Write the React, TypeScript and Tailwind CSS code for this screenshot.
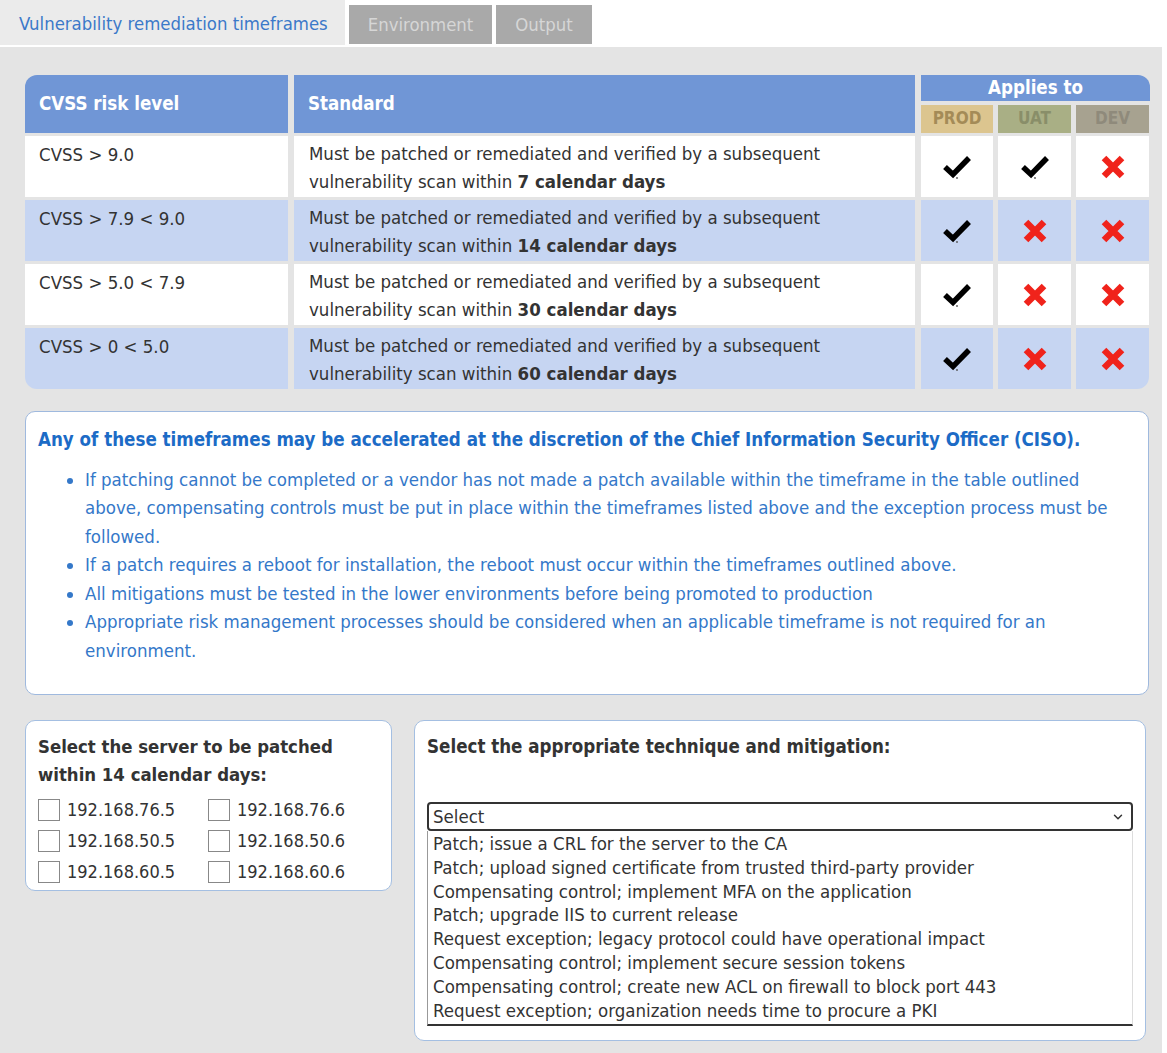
import React from 'react';
import { ChevronDown } from 'lucide-react';

const rows = [
  { level: 'CVSS > 9.0', days: '7', prod: true, uat: true, dev: false },
  { level: 'CVSS > 7.9 < 9.0', days: '14', prod: true, uat: false, dev: false },
  { level: 'CVSS > 5.0 < 7.9', days: '30', prod: true, uat: false, dev: false },
  { level: 'CVSS > 0 < 5.0', days: '60', prod: true, uat: false, dev: false },
];

const servers = [
  ['192.168.76.5', '192.168.76.6'],
  ['192.168.50.5', '192.168.50.6'],
  ['192.168.60.5', '192.168.60.6'],
];

const options = [
  'Patch; issue a CRL for the server to the CA',
  'Patch; upload signed certificate from trusted third-party provider',
  'Compensating control; implement MFA on the application',
  'Patch; upgrade IIS to current release',
  'Request exception; legacy protocol could have operational impact',
  'Compensating control; implement secure session tokens',
  'Compensating control; create new ACL on firewall to block port 443',
  'Request exception; organization needs time to procure a PKI',
];

function Check() {
  return (
    <svg width="30" height="26" viewBox="0 0 30 26">
      <path d="M3 13 L11 20.5 L27 4" fill="none" stroke="#000" strokeWidth="5.5" strokeLinejoin="miter" />
      <circle cx="15" cy="24" r="0.9" fill="#555" />
    </svg>
  );
}

function Cross() {
  return (
    <svg width="26" height="26" viewBox="0 0 26 26">
      <path d="M4 4 L22 22 M22 4 L4 22" fill="none" stroke="#f0231b" strokeWidth="6.5" />
    </svg>
  );
}

function Mark({ ok }: { ok: boolean }) {
  return ok ? <Check /> : <Cross />;
}

export default function App() {
  return (
    <div className="w-[1167px] h-[1053px] bg-white font-['DejaVu_Sans_Condensed','DejaVu_Sans',sans-serif] text-[#333]">
      {/* tabs */}
      <div className="flex h-[45px] items-end gap-[4px]">
        <div className="h-[45px] w-[345px] bg-[#ebebeb] pl-[19px] pt-[10px] text-[18.4px] text-[#3b79c9]">
          Vulnerability remediation timeframes
        </div>
        <div className="mb-[1px] flex h-[39px] w-[143px] items-center justify-center bg-[#a9a9a9] text-[18.4px] text-[#d6d6d6]">
          Environment
        </div>
        <div className="mb-[1px] flex h-[39px] w-[96px] items-center justify-center bg-[#a9a9a9] text-[18.4px] text-[#d6d6d6]">
          Output
        </div>
      </div>

      <div className="mt-[2px] h-[1006px] w-[1162px] bg-[#e4e4e4] pl-[25px] pr-[8px] pt-[28px]">
        {/* timeframe table */}
        <div className="grid grid-cols-[263px_621px_229px] gap-x-[6px] gap-y-[3px]">
          <div className="flex h-[58px] items-center rounded-tl-[12px] bg-[#7096d6] pl-[14px] text-[18.6px] font-bold text-white">
            CVSS risk level
          </div>
          <div className="flex h-[58px] items-center bg-[#7096d6] pl-[14px] text-[18.6px] font-bold text-white">
            Standard
          </div>
          <div className="flex h-[58px] flex-col gap-[4px]">
            <div className="flex h-[26px] items-center justify-center rounded-tr-[12px] bg-[#7096d6] text-[18.6px] font-bold text-white">
              Applies to
            </div>
            <div className="grid h-[28px] grid-cols-[72px_73px_73px] gap-x-[5px] text-[17px] font-bold">
              <div className="flex items-center justify-center bg-[#dcc58f] text-[#a48b57]">PROD</div>
              <div className="flex items-center justify-center bg-[#a9af85] text-[#898e69]">UAT</div>
              <div className="flex items-center justify-center bg-[#a7a290] text-[#8f8a7b]">DEV</div>
            </div>
          </div>

          {rows.map((r, i) => {
            const bg = i % 2 === 0 ? 'bg-white' : 'bg-[#c6d5f2]';
            const last = i === rows.length - 1;
            return (
              <React.Fragment key={r.level}>
                <div className={`h-[61px] pl-[14px] pt-[5px] text-[18.5px] leading-[28px] ${bg} ${last ? 'rounded-bl-[12px]' : ''}`}>
                  {r.level}
                </div>
                <div className={`h-[61px] pl-[15px] pt-[4px] text-[18.5px] leading-[28px] ${bg}`}>
                  Must be patched or remediated and verified by a subsequent
                  <br />
                  vulnerability scan within <b>{r.days} calendar days</b>
                </div>
                <div className="grid h-[61px] grid-cols-[72px_73px_73px] gap-x-[5px]">
                  <div className={`flex items-center justify-center ${bg}`}><Mark ok={r.prod} /></div>
                  <div className={`flex items-center justify-center ${bg}`}><Mark ok={r.uat} /></div>
                  <div className={`flex items-center justify-center ${bg} ${last ? 'rounded-br-[12px]' : ''}`}><Mark ok={r.dev} /></div>
                </div>
              </React.Fragment>
            );
          })}
        </div>

        {/* policy notes */}
        <div className="mt-[22px] h-[284px] w-[1124px] rounded-[10px] border border-[#9fb9de] bg-white pl-[12px] pt-[14px]">
          <div className="text-[18.6px] font-bold text-[#1c6bc6]">
            Any of these timeframes may be accelerated at the discretion of the Chief Information Security Officer (CISO).
          </div>
          <ul className="mt-[12px] list-disc pl-[47px] pr-[30px] text-[18.5px] leading-[28.5px] text-[#3478c9] marker:text-[#3478c9]">
            <li>
              If patching cannot be completed or a vendor has not made a patch available within the timeframe in the table outlined above, compensating controls must be put in place within the timeframes listed above and the exception process must be followed.
            </li>
            <li>If a patch requires a reboot for installation, the reboot must occur within the timeframes outlined above.</li>
            <li>All mitigations must be tested in the lower environments before being promoted to production</li>
            <li>
              Appropriate risk management processes should be considered when an applicable timeframe is not required for an environment.
            </li>
          </ul>
        </div>

        {/* answer area */}
        <div className="mt-[25px] flex items-start gap-[22px]">
          <div className="h-[171px] w-[367px] shrink-0 rounded-[10px] border border-[#a4bfe2] bg-white pl-[12px] pt-[12px]">
            <div className="text-[18.4px] font-bold leading-[28px]">
              Select the server to be patched
              <br />
              within 14 calendar days:
            </div>
            <div className="mt-[10px] flex flex-col gap-[9px]">
              {servers.map((pair) => (
                <div key={pair[0]} className="grid grid-cols-[170px_170px]">
                  {pair.map((ip) => (
                    <label key={ip} className="flex items-center gap-[7px] text-[18px] leading-[22px]">
                      <span className="h-[22px] w-[22px] border border-[#888] bg-white" />
                      {ip}
                    </label>
                  ))}
                </div>
              ))}
            </div>
          </div>

          <div className="h-[321px] w-[732px] shrink-0 rounded-[10px] border border-[#a4bfe2] bg-white px-[12px] pt-[12px]">
            <div className="text-[18.6px] font-bold leading-[28px]">Select the appropriate technique and mitigation:</div>
            <div className="mt-[41px] flex h-[29px] items-center justify-between rounded-[4px] border-2 border-[#333] pl-[4px] pr-[6px] text-[18.5px]">
              Select
              <ChevronDown size={14} strokeWidth={2.5} className="text-[#333]" />
            </div>
            <div className="border-b-2 border-l border-r border-b-[#333] border-l-[#999] border-r-[#ddd] pb-[2px] pl-[5px] pt-[1px] text-[18.5px] leading-[23.8px]">
              {options.map((o) => (
                <div key={o}>{o}</div>
              ))}
            </div>
          </div>
        </div>
      </div>
    </div>
  );
}
